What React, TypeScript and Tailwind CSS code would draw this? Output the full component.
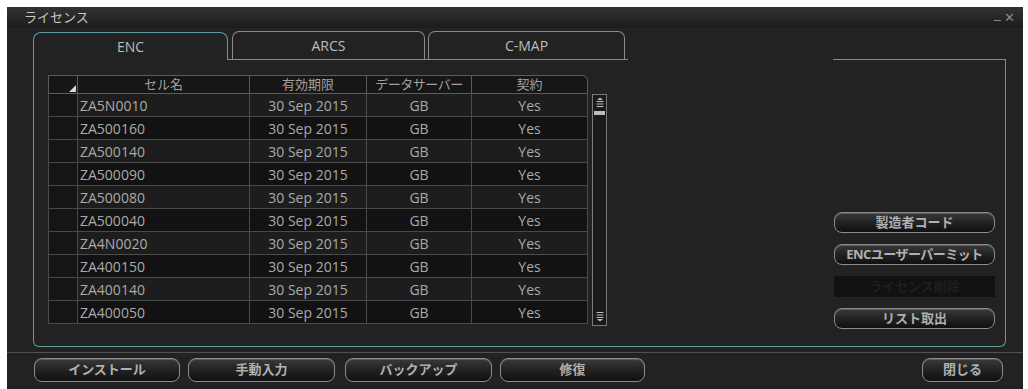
import React from 'react';

const rows = [
  'ZA5N0010',
  'ZA500160',
  'ZA500140',
  'ZA500090',
  'ZA500080',
  'ZA500040',
  'ZA4N0020',
  'ZA400150',
  'ZA400140',
  'ZA400050',
];

function Btn({ label, className = '' }: { label: string; className?: string }) {
  return (
    <div
      className={`flex items-center justify-center rounded-[8px] border border-[#8c8c8c] bg-gradient-to-b from-[#3a3a3a] via-[#222] to-[#101010] text-[13px] font-bold text-[#b0b0b0] shadow-[inset_0_1px_0_#5a5a5a] ${className}`}
    >
      {label}
    </div>
  );
}

function ScrollUp() {
  return (
    <svg width="12" height="14" viewBox="0 0 12 14" className="mx-auto mt-[1px]">
      <path d="M3 4 L6 1.5 L9 4 Z" fill="#bbb" />
      <rect x="2.5" y="5" width="7" height="1" fill="#bbb" />
      <rect x="2.5" y="7.5" width="7" height="1" fill="#bbb" />
      <rect x="2.5" y="10" width="7" height="1" fill="#bbb" />
    </svg>
  );
}

function ScrollDown() {
  return (
    <svg width="12" height="14" viewBox="0 0 12 14" className="mx-auto mb-[1px]">
      <rect x="2.5" y="2" width="7" height="1" fill="#bbb" />
      <rect x="2.5" y="4.5" width="7" height="1" fill="#bbb" />
      <rect x="2.5" y="7" width="7" height="1" fill="#bbb" />
      <path d="M3 9 L6 11.5 L9 9 Z" fill="#bbb" />
    </svg>
  );
}

function CellTable() {
  return (
    <div className="flex w-[540px] flex-col">
      {/* header */}
      <div className="flex h-[19px] text-[13px] text-[#a0a0a0]">
        <div className="relative w-[30px] border border-[#5c5c5c] bg-[#161616]">
          <div className="absolute bottom-[1px] right-[1px] h-0 w-0 border-b-[7px] border-l-[7px] border-b-[#d8d8d8] border-l-transparent" />
        </div>
        <div className="flex w-[172px] items-center justify-center border-y border-r border-[#5c5c5c] bg-[#161616]">セル名</div>
        <div className="flex w-[117px] items-center justify-center border-y border-r border-[#5c5c5c] bg-[#161616]">有効期限</div>
        <div className="flex w-[105px] items-center justify-center border-y border-r border-[#5c5c5c] bg-[#161616] tracking-[-0.5px]">データサーバー</div>
        <div className="flex w-[116px] items-center justify-center rounded-tr-[6px] border-y border-r border-[#5c5c5c] bg-[#161616]">契約</div>
      </div>
      {rows.map((name, i) => (
        <div
          key={name}
          className={`flex h-[23px] text-[14px] text-[#aaaaaa] ${i % 2 === 0 ? 'bg-[#1d1d1d]' : 'bg-[#121212]'}`}
        >
          <div className="w-[30px] border-b border-l border-r border-[#4a4a4a] bg-[#151515]" />
          <div className="flex w-[172px] items-center border-b border-r border-[#4a4a4a] pl-[2px]">{name}</div>
          <div className="flex w-[117px] items-center justify-center border-b border-r border-[#4a4a4a]">30 Sep 2015</div>
          <div className="flex w-[105px] items-center justify-center border-b border-r border-[#4a4a4a]">GB</div>
          <div className="flex w-[116px] items-center justify-center border-b border-r border-[#4a4a4a]">Yes</div>
        </div>
      ))}
    </div>
  );
}

export default function App() {
  return (
    <div className="h-[389px] w-[1028px] bg-white pl-[7px] pt-[7px] font-['Open_Sans','Noto_Sans_CJK_JP',sans-serif]">
      <div className="flex h-[382px] w-[1016px] flex-col bg-[#222222]">
        {/* title bar */}
        <div className="flex h-[21px] items-center justify-between bg-gradient-to-b from-[#333] to-[#1b1b1b] pl-[17px] pr-[8px]">
          <span className="text-[13px] leading-none text-[#c8c8c8]">ライセンス</span>
          <span className="flex items-center gap-[3px] text-[13px] leading-none text-[#8a8a8a]">
            <span className="mt-[6px] h-[1px] w-[7px] bg-[#8a8a8a]" />
            <span>✕</span>
          </span>
        </div>

        {/* tab block */}
        <div className="ml-[26px] mt-[4px] flex w-[973px] flex-col">
          <div className="flex h-[28px]">
            <div className="flex w-[195px] items-center justify-center rounded-t-[8px] border-l border-r border-t border-[#5f9a9c] text-[14px] text-[#bdbdbd]">
              ENC
            </div>
            <div className="flex w-[400px] items-end gap-[3px] border-b border-[#5f9a9c] pl-[4px]">
              <div className="flex h-[28px] w-[193px] items-center justify-center rounded-t-[7px] border-l border-r border-t border-[#8a8a8a] text-[14px] text-[#bdbdbd]">
                ARCS
              </div>
              <div className="flex h-[28px] w-[197px] items-center justify-center rounded-t-[7px] border-l border-r border-t border-[#8a8a8a] text-[14px] text-[#bdbdbd]">
                C-MAP
              </div>
            </div>
            <div className="flex-1" />
            <div className="w-[173px] border-b border-[#5f9a9c]" />
          </div>

          {/* panel */}
          <div className="flex h-[287px] rounded-b-[6px] border-b border-l border-r border-[#5f9a9c] pl-[14px] pt-[15px]">
            <CellTable />
            <div className="ml-[4px] mt-[19px] flex h-[232px] w-[15px] flex-col border border-[#7a7a7a] bg-[#1a1a1a]">
              <ScrollUp />
              <div className="mx-[1px] mt-[1px] h-[4px] bg-[#bdbdbd]" />
              <div className="flex-1" />
              <ScrollDown />
            </div>
            <div className="flex-1" />
            <div className="mr-[10px] flex w-[161px] flex-col gap-[11px] pt-[137px]">
              <Btn label="製造者コード" className="h-[21px]" />
              <Btn label="ENCユーザーパーミット" className="h-[21px] tracking-[-0.5px]" />
              <div className="flex h-[21px] items-center justify-center bg-[#111111] text-[13px] font-bold text-[#1f1f1f]">
                ライセンス削除
              </div>
              <Btn label="リスト取出" className="h-[21px]" />
            </div>
          </div>
        </div>

        {/* separator */}
        <div className="mt-[5px] h-[1px] w-full bg-[#505050]" />

        {/* bottom buttons */}
        <div className="mt-[5px] flex h-[24px] pl-[27px] pr-[20px]">
          <Btn label="インストール" className="w-[146px]" />
          <Btn label="手動入力" className="ml-[8px] w-[147px]" />
          <Btn label="バックアップ" className="ml-[10px] w-[147px]" />
          <Btn label="修復" className="ml-[8px] w-[145px]" />
          <div className="flex-1" />
          <Btn label="閉じる" className="w-[81px]" />
        </div>
      </div>
    </div>
  );
}
